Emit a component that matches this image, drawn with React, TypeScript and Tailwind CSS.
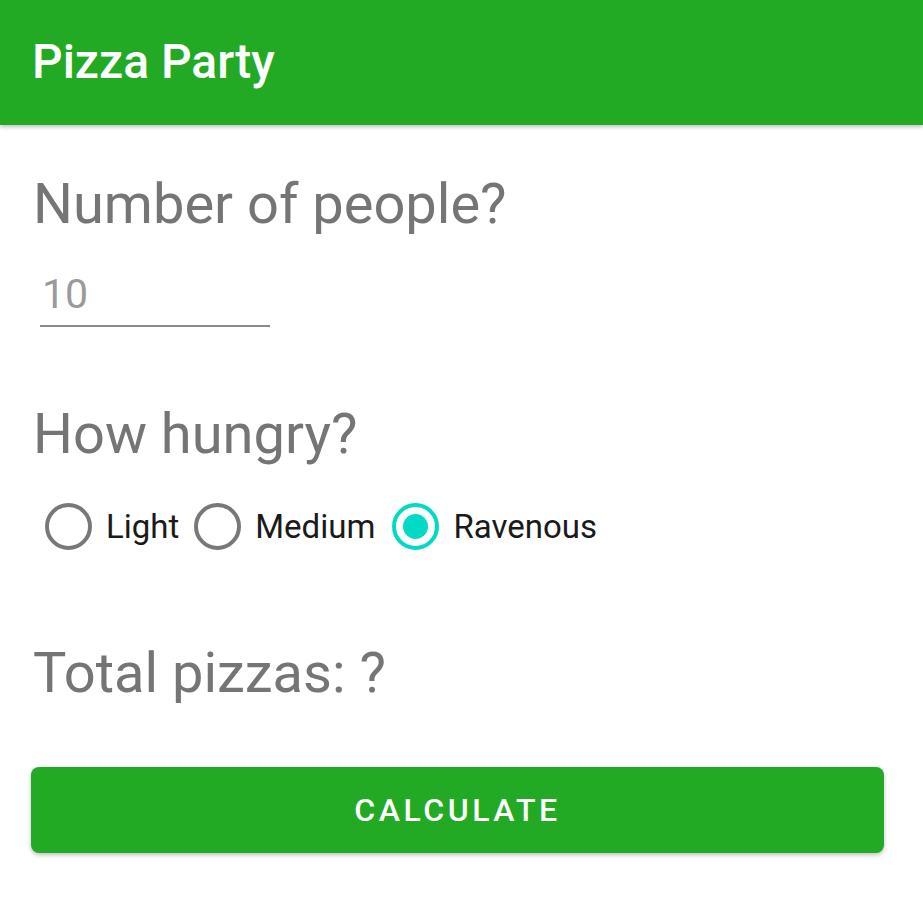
import React, { useState } from "react";

const levels = ["Light", "Medium", "Ravenous"];

const Radio = ({ checked }: { checked: boolean }) => (
  <div
    className={`flex h-[47px] w-[47px] shrink-0 items-center justify-center rounded-full border-[4px] ${
      checked ? "border-[#03dac5]" : "border-[#787878]"
    }`}
  >
    {checked && <div className="h-[25px] w-[25px] rounded-full bg-[#03dac5]" />}
  </div>
);

export default function App() {
  const [hunger, setHunger] = useState("Ravenous");

  return (
    <div
      className="h-[923px] w-[923px] overflow-hidden bg-white"
      style={{ fontFamily: "Roboto, 'Liberation Sans', sans-serif" }}
    >
      {/* toolbar */}
      <div className="flex h-[125px] items-center bg-[#22aa24] px-[32px] pb-[2px] shadow-[0_2px_4px_rgba(0,0,0,0.25)]">
        <div className="text-[48px] font-medium leading-none text-white">Pizza Party</div>
      </div>

      <div className="flex flex-col">
        <div className="ml-[33px] mt-[51px] text-[56px] leading-[56px] text-[#757575]">
          Number of people?
        </div>

        <div className="ml-[40px] mt-[41px] w-[230px] border-b-2 border-[#8a8a8a] pb-[10px]">
          <div className="pl-[2px] text-[41px] leading-[42px] text-[#9a9a9a]">10</div>
        </div>

        <div className="ml-[33px] mt-[79px] text-[56px] leading-[56px] text-[#757575]">
          How hungry?
        </div>

        {/* radio group */}
        <div className="ml-[45px] mt-[41px] flex h-[47px] flex-row items-center">
          {levels.map((level, i) => (
            <div
              key={level}
              className={`flex cursor-pointer flex-row items-center ${
                i === 1 ? "ml-[15px]" : i === 2 ? "ml-[17px]" : ""
              }`}
              onClick={() => setHunger(level)}
            >
              <Radio checked={hunger === level} />
              <div className="ml-[14px] text-[33px] leading-[47px] text-[#1a1a1a]">{level}</div>
            </div>
          ))}
        </div>

        <div className="ml-[33px] mt-[95px] text-[56px] leading-[56px] text-[#757575]">
          Total pizzas: ?
        </div>

        <button className="ml-[31px] mt-[66px] flex h-[86px] w-[853px] items-center justify-center rounded-[8px] bg-[#22aa24] shadow-[0_2px_4px_rgba(0,0,0,0.25)]">
          <span className="text-[32px] font-medium tracking-[0.11em] text-white">CALCULATE</span>
        </button>
      </div>
    </div>
  );
}
